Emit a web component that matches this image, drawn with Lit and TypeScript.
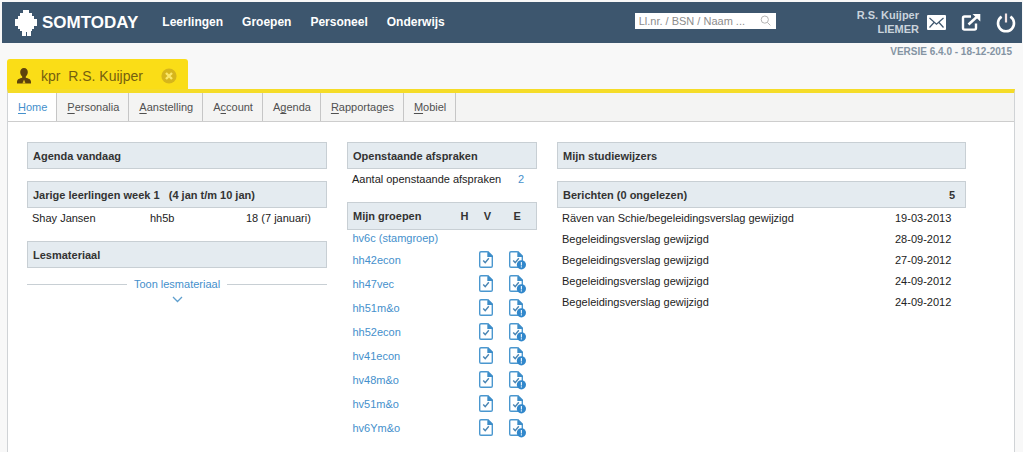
import { LitElement, html, css, svg, nothing } from "lit";
import { customElement, property } from "lit/decorators.js";

type MenuItem = { before: string; key: string; after: string; active?: boolean };

const NAV = ["Leerlingen", "Groepen", "Personeel", "Onderwijs"];

const MENU: MenuItem[] = [
  { before: "", key: "H", after: "ome", active: true },
  { before: "", key: "P", after: "ersonalia" },
  { before: "", key: "A", after: "anstelling" },
  { before: "A", key: "c", after: "count" },
  { before: "A", key: "g", after: "enda" },
  { before: "", key: "R", after: "apportages" },
  { before: "", key: "M", after: "obiel" },
];

const GROUPS = ["hh42econ", "hh47vec", "hh51m&o", "hh52econ", "hv41econ", "hv48m&o", "hv51m&o", "hv6Ym&o"];

const MESSAGES = [
  ["Räven van Schie/begeleidingsverslag gewijzigd", "19-03-2013"],
  ["Begeleidingsverslag gewijzigd", "28-09-2012"],
  ["Begeleidingsverslag gewijzigd", "27-09-2012"],
  ["Begeleidingsverslag gewijzigd", "24-09-2012"],
  ["Begeleidingsverslag gewijzigd", "24-09-2012"],
];

/** Document with a tick, optionally carrying an alert badge. */
@customElement("doc-icon")
class DocIcon extends LitElement {
  @property({ type: Boolean }) alert = false;

  static styles = css`
    :host { display: block; width: 18px; height: 20px; }
    .doc { display: block; }
  `;

  render() {
    return html`<svg class="doc" width="18" height="20" viewBox="0 0 18 20" fill="none" aria-hidden="true">
      <path d="M9.5 1.7H3Q1.7 1.7 1.7 3V16Q1.7 17.3 3 17.3H13Q14.3 17.3 14.3 16V6.5" stroke="#4a97cf" stroke-width="1.4" />
      <path d="M9.3 1H10.2L15 5.8V7H9.3Z" fill="#3d8dc9" />
      <path d="M5.2 10.6L7.2 12.6L10.8 8.2" stroke="#4a86b4" stroke-width="1.4" />
      ${this.alert
        ? svg`<circle cx="13.4" cy="14.8" r="4.6" fill="#3187cb" />
            <path d="M13.4 12V15.4M13.4 16.2V17.6" stroke="#e4f1fa" stroke-width="1.2" />`
        : nothing}
    </svg>`;
  }
}

@customElement("app-root")
class AppRoot extends LitElement {
  static styles = css`
    :host {
      box-sizing: border-box;
      min-height: 100vh;
      padding: 2px 1px 0 2px;
      background: #f8f8f8;
      color: #222;
      font: 11px/14px "Liberation Sans", Arial, sans-serif;
      display: flex;
      flex-direction: column;
    }
    * { box-sizing: border-box; }
    a { color: #4590cc; text-decoration: none; }
    button { border: 0; padding: 0; background: none; font: inherit; color: inherit; cursor: pointer; }
    svg { display: block; }
    h1, h2 { margin: 0; font-size: inherit; }

    .bar {
      display: flex;
      align-items: center;
      height: 41px;
      padding: 0 6px 0 13px;
      background: #3d566e;
      color: #fff;
    }
    .brand { display: flex; align-items: center; gap: 5px; color: #fff; font-size: 17px; line-height: 20px; font-weight: bold; }
    .nav { display: flex; gap: 19px; margin: 0 auto 2px 24px; }
    .nav a { color: #fff; font-size: 12px; font-weight: bold; }
    .search { display: flex; align-items: center; width: 141px; height: 16px; margin: 0 81px 4px 0; padding: 0 5px 0 4px; background: #fff; }
    .search input { flex: 1; min-width: 0; padding: 0; border: 0; outline: 0; background: none; font: inherit; color: #444; }
    .search input::placeholder { color: #8c8c8c; opacity: 1; }
    .user { margin: 0 8px 2px 0; color: #c9d3dc; font-weight: bold; text-align: right; }
    .tools { display: flex; align-items: center; gap: 15px; }

    .version { height: 16px; padding-right: 10px; text-align: right; font-size: 10px; line-height: 17px; font-weight: bold; color: #8494a3; }

    .page { flex: 1; display: flex; flex-direction: column; margin: 0 7px 0 5px; }
    .person {
      display: flex;
      align-items: center;
      align-self: flex-start;
      height: 30px;
      padding: 3px 11px 0 10px;
      border-radius: 3px 3px 0 0;
      background: #fadd17;
      color: #75600f;
      font-size: 14px;
      line-height: 18px;
    }
    .person .name { margin: 0 18px 0 10px; font-weight: normal; white-space: pre; }
    .panel { flex: 1; border: 1px solid #d0d3d6; border-top: 4px solid #f5dc28; border-bottom: 0; background: #fff; }
    .menu { display: flex; height: 29px; border-bottom: 1px solid #cdcdcd; background: #f4f4f3; }
    .menu a { padding: 0 9px 0 10px; border-right: 1px solid #c6c6c6; line-height: 28px; color: #505050; }
    .menu a.active { background: #fff; color: #4590cc; }
    .menu u { text-underline-offset: 2px; }

    .columns {
      display: grid;
      grid-template-columns: 300fr 190fr 409fr;
      gap: 20px;
      align-items: start;
      padding: 20px 48px 12px 19px;
    }
    .head {
      display: flex;
      justify-content: space-between;
      align-items: center;
      height: 27px;
      padding: 0 10px 0 5px;
      border: 1px solid #c8cfd4;
      background: #e4ebf0;
      color: #333;
      font-weight: bold;
      white-space: pre;
    }
    .block { margin-bottom: 12px; }
    table { width: 100%; border-collapse: collapse; }
    td, th { padding: 0; text-align: left; font-weight: normal; }
    .rows td { height: 21px; padding: 0 0 2px 5px; white-space: nowrap; }
    .class { width: 96px; }
    .birthday { width: 86px; }
    .date { width: 76px; }
    .count { width: 24px; }

    .groups thead th {
      height: 27px;
      border: solid #c8cfd4;
      border-width: 1px 0;
      background: #e4ebf0;
      color: #333;
      font-weight: bold;
      text-align: center;
    }
    .groups thead th:first-child { padding-left: 5px; border-left-width: 1px; text-align: left; }
    .groups thead th:last-child { border-right-width: 1px; }
    .groups td { height: 24px; padding: 0 0 2px 5px; }
    .groups .stem td { height: 19px; }
    .groups .mark { padding: 0 2px 2px 0; }
    .groups .mark a { display: block; width: 18px; margin: 0 auto; }
    .h { width: 24px; }
    .v { width: 22px; }
    .e { width: 38px; }

    .more { display: grid; grid-template-columns: 1fr auto 1fr; align-items: center; column-gap: 7px; width: 100%; padding-top: 9px; color: #4590cc; }
    .more .line { height: 1px; background: #c8cfd4; }
    .more .arrow { grid-column: 2; justify-self: center; margin-top: 5px; }
  `;

  render() {
    return html`
      <header class="bar">
        <a class="brand" href="#">
          <svg width="22" height="26" viewBox="0 0 22 26" fill="#fff" aria-hidden="true">
            <path d="M8 0H14V3H17V6H19V9H22V16H19V19H17V21H16V26H12V22H11V26H7V21H5V19H3V16H0V9H3V6H5V3H8Z" />
          </svg>
          <span>SOMTODAY</span>
        </a>
        <nav class="nav">${NAV.map((n) => html`<a href="#">${n}</a>`)}</nav>
        <label class="search">
          <input type="text" aria-label="Zoeken" placeholder="Ll.nr. / BSN / Naam ..." />
          <svg width="11" height="11" viewBox="0 0 11 11" fill="none" stroke="#b5b5b5" aria-hidden="true">
            <circle cx="4.8" cy="4.6" r="3.6" /><path d="M7.4 7.4L10.4 10.4" />
          </svg>
        </label>
        <div class="user">R.S. Kuijper<br />LIEMER</div>
        <div class="tools">
          <button aria-label="Berichten">
            <svg width="19" height="15" viewBox="0 0 19 15" fill="none">
              <rect width="19" height="15" rx="1" fill="#fff" />
              <path d="M2.5 3L9.5 9.2L16.5 3M2.5 12.5L7 7.5M16.5 12.5L12 7.5" stroke="#3d566e" stroke-width="1.2" />
            </svg>
          </button>
          <button aria-label="Openen in nieuw venster">
            <svg width="20" height="19" viewBox="0 0 20 19" fill="none">
              <path d="M10 3.5H3.5Q2 3.5 2 5V15Q2 16.6 3.5 16.6H13.5Q15 16.6 15 15V10.5" stroke="#fff" stroke-width="2.4" />
              <path d="M7.5 11.5L16 3.8" stroke="#fff" stroke-width="2.6" />
              <path d="M11.5 1H19.3V8.5Z" fill="#fff" />
            </svg>
          </button>
          <button aria-label="Uitloggen">
            <svg width="20" height="20" viewBox="0 0 20 20" fill="none" stroke="#fff" stroke-width="2.6">
              <path d="M5.6 3.6A8 8 0 1 0 14.4 3.6" /><path d="M10 0.5V9.5" stroke="#f3e4e4" stroke-width="2.2" />
            </svg>
          </button>
        </div>
      </header>
      <div class="version">VERSIE 6.4.0 - 18-12-2015</div>

      <main class="page">
        <div class="person">
          <svg width="14" height="16" viewBox="0 0 14 16" aria-hidden="true">
            <path d="M7 0C9.4 0 10.8 1.7 10.8 4C10.8 6 9.7 7.8 8.8 8.6V9.8C11.5 10.6 14 11.2 14 14V15.5H0V14C0 11.2 2.5 10.6 5.2 9.8V8.6C4.3 7.8 3.2 6 3.2 4C3.2 1.7 4.6 0 7 0Z" fill="#5e420c" />
            <path d="M7 11.5L8.6 15.5H5.4Z" fill="#e3c01a" />
          </svg>
          <h1 class="name">kpr  R.S. Kuijper</h1>
          <button aria-label="Tabblad sluiten">
            <svg width="16" height="16" viewBox="0 0 16 16">
              <circle cx="8" cy="8" r="7.6" fill="#d6b51c" />
              <path d="M5 5L11 11M11 5L5 11" stroke="#fbe768" stroke-width="2.4" />
            </svg>
          </button>
        </div>
        <div class="panel">
          <nav class="menu">
            ${MENU.map((m) => html`<a href="#" class=${m.active ? "active" : ""}>${m.before}<u>${m.key}</u>${m.after}</a>`)}
          </nav>
          <div class="columns">
            <div>
              <section class="block"><h2 class="head">Agenda vandaag</h2></section>
              <section class="block">
                <h2 class="head">Jarige leerlingen week 1   (4 jan t/m 10 jan)</h2>
                <table class="rows">
                  <tr><td>Shay Jansen</td><td class="class">hh5b</td><td class="birthday">18 (7 januari)</td></tr>
                </table>
              </section>
              <section class="block">
                <h2 class="head">Lesmateriaal</h2>
                <button class="more">
                  <span class="line"></span><span>Toon lesmateriaal</span><span class="line"></span>
                  <svg class="arrow" width="11" height="7" viewBox="0 0 11 7" fill="none" stroke="#5f9fce" stroke-width="1.3" aria-hidden="true"><path d="M1 1L5.5 5.5L10 1" /></svg>
                </button>
              </section>
            </div>
            <div>
              <section class="block">
                <h2 class="head">Openstaande afspraken</h2>
                <table class="rows">
                  <tr><td>Aantal openstaande afspraken</td><td class="count"><a href="#">2</a></td></tr>
                </table>
              </section>
              <table class="groups">
                <thead><tr><th>Mijn groepen</th><th class="h">H</th><th class="v">V</th><th class="e">E</th></tr></thead>
                <tbody>
                  <tr class="stem"><td colspan="4"><a href="#">hv6c (stamgroep)</a></td></tr>
                  ${GROUPS.map(
                    (g) => html`<tr>
                      <td><a href="#">${g}</a></td>
                      <td class="mark"></td>
                      <td class="mark"><a href="#" aria-label="V ${g}"><doc-icon></doc-icon></a></td>
                      <td class="mark"><a href="#" aria-label="E ${g}"><doc-icon alert></doc-icon></a></td>
                    </tr>`
                  )}
                </tbody>
              </table>
            </div>
            <div>
              <section class="block"><h2 class="head">Mijn studiewijzers</h2></section>
              <section class="block">
                <h2 class="head"><span>Berichten (0 ongelezen)</span><span>5</span></h2>
                <table class="rows">
                  ${MESSAGES.map(([text, date]) => html`<tr><td>${text}</td><td class="date">${date}</td></tr>`)}
                </table>
              </section>
            </div>
          </div>
        </div>
      </main>
    `;
  }
}
